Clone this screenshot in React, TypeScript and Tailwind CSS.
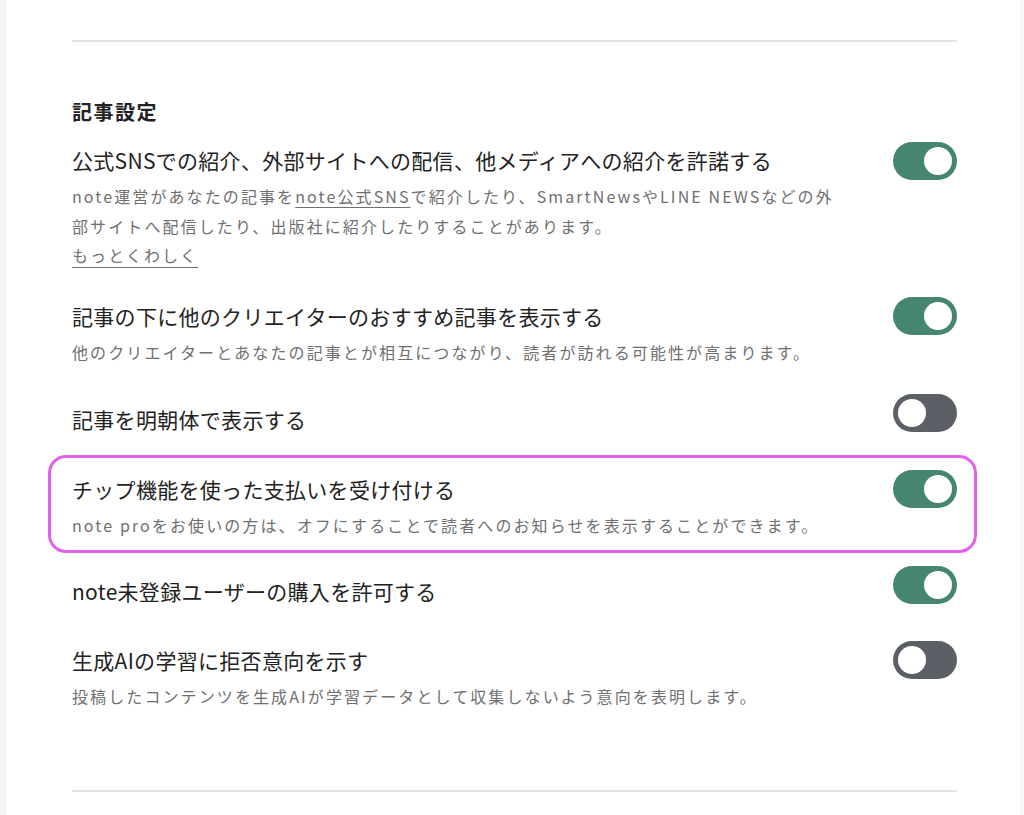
import React from "react";

const FONT = { fontFamily: '"Noto Sans CJK JP", "Noto Sans", sans-serif' };

function Toggle({ on }: { on: boolean }) {
  return (
    <div
      className={
        "relative w-[64px] h-[38px] rounded-full shrink-0 ml-[30px] " +
        (on ? "bg-[#468670]" : "bg-[#5b6067]")
      }
    >
      <div
        className={
          "absolute top-[5px] w-[28px] h-[28px] rounded-full bg-white " +
          (on ? "right-[5px]" : "left-[5px]")
        }
      />
    </div>
  );
}

function Row({
  title,
  desc,
  on,
  titleMt,
  className = "",
}: {
  title: string;
  desc?: React.ReactNode;
  on: boolean;
  titleMt: string;
  className?: string;
}) {
  return (
    <div className={"flex items-start justify-between " + className}>
      <div className="flex-1 min-w-0">
        <div
          className={
            "text-[21px] leading-[30px] tracking-[0.3px] text-[#222222] whitespace-nowrap " + titleMt
          }
        >
          {title}
        </div>
        {desc && (
          <div className="mt-[7px] text-[16px] leading-[29.5px] tracking-[2.1px] text-[#6f6f6f] whitespace-nowrap">
            {desc}
          </div>
        )}
      </div>
      <Toggle on={on} />
    </div>
  );
}

export default function App() {
  return (
    <div className="flex min-h-[815px] bg-white" style={FONT}>
      <div className="w-[6px] bg-[#f3f6f8] shrink-0" />
      <div className="flex-1 pl-[66px] pr-[63px]">
        <div className="pt-[40px]">
          <div className="h-[2px] bg-[#e2e2e2]" />
        </div>
        <h2 className="mt-[55px] text-[20px] leading-[30px] font-bold tracking-[1.5px] text-[#222222]">
          記事設定
        </h2>

        <Row
          className="mt-[15px]"
          titleMt="mt-[3px]"
          on={true}
          title="公式SNSでの紹介、外部サイトへの配信、他メディアへの紹介を許諾する"
          desc={
            <>
              note運営があなたの記事を<span className="underline underline-offset-[4px]">note公式SNS</span>
              で紹介したり、SmartNewsやLINE NEWSなどの外
              <br />
              部サイトへ配信したり、出版社に紹介したりすることがあります。
              <br />
              <span className="underline underline-offset-[5px]">もっとくわしく</span>
            </>
          }
        />

        <Row
          className="mt-[26.5px]"
          titleMt="mt-[4px]"
          on={true}
          title="記事の下に他のクリエイターのおすすめ記事を表示する"
          desc="他のクリエイターとあなたの記事とが相互につながり、読者が訪れる可能性が高まります。"
        />

        <Row className="mt-[26.5px]" titleMt="mt-[10px]" on={false} title="記事を明朝体で表示する" />

        <div className="mt-[21px] -ml-[24px] -mr-[20px] pl-[21px] pr-[17px] pt-[12px] pb-[9px] border-[3px] border-[#e262ea] rounded-[18px]">
          <Row
            titleMt="mt-[4px]"
            on={true}
            title="チップ機能を使った支払いを受け付ける"
            desc="note proをお使いの方は、オフにすることで読者へのお知らせを表示することができます。"
          />
        </div>

        <Row className="mt-[13.5px]" titleMt="mt-[10px]" on={true} title="note未登録ユーザーの購入を許可する" />

        <Row
          className="mt-[35px]"
          titleMt="mt-[4px]"
          on={false}
          title="生成AIの学習に拒否意向を示す"
          desc="投稿したコンテンツを生成AIが学習データとして収集しないよう意向を表明します。"
        />

        <div className="mt-[78px] h-[2px] bg-[#e2e2e2]" />
      </div>
      <div className="w-[4px] bg-[#f7f8f9] shrink-0" />
    </div>
  );
}
